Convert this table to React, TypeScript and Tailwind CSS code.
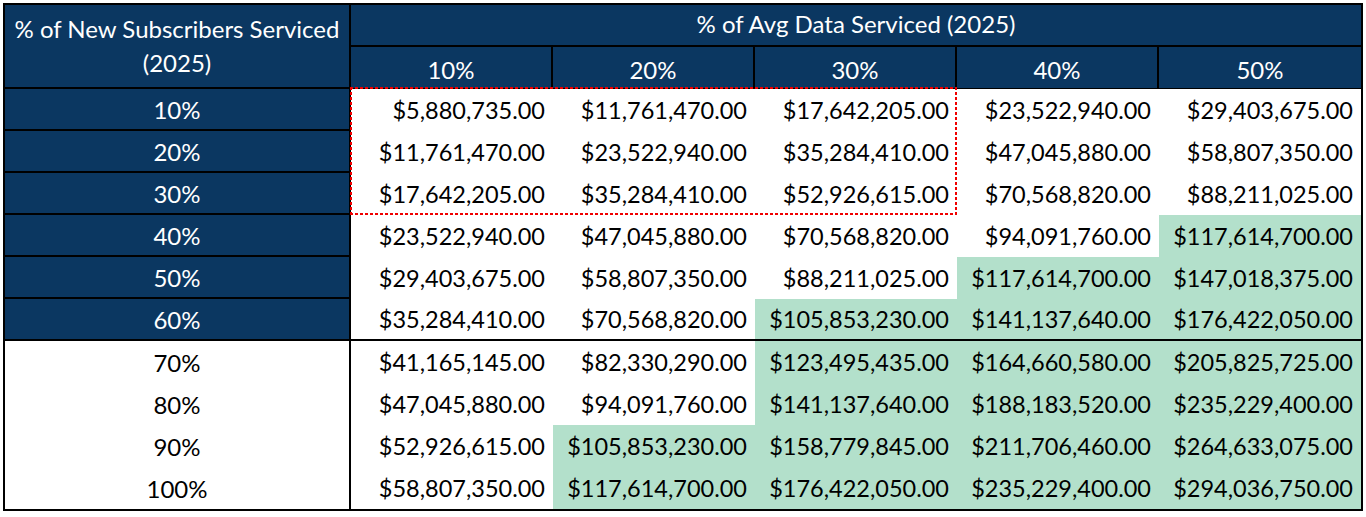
const COLS = [10, 20, 30, 40, 50];
const ROWS = [10, 20, 30, 40, 50, 60, 70, 80, 90, 100];
const BASE = 5880735;

const money = (n: number) =>
  "$" + String(n).replace(/\B(?=(\d{3})+(?!\d))/g, ",") + ".00";

const BodyRow = ({ r }: { r: number }) => {
  const navy = r <= 60;
  const line = r === 60;
  return (
    <div className="flex h-[42px]">
      <div
        className={`flex w-[346px] items-center justify-center border-r-2 border-black pt-[2px] ${
          navy ? "border-b-2 bg-[#0b3761] text-white" : "bg-white text-black"
        }`}
      >
        {r}%
      </div>
      {COLS.map((c) => {
        const value = BASE * (r / 10) * (c / 10);
        return (
          <div
            key={c}
            className={`flex w-[202px] items-center justify-end pr-[8px] pt-[2px] text-[23.5px] text-black ${
              value > 100000000 ? "bg-[#b3e0cb]" : "bg-white"
            } ${line ? "border-b-2 border-black" : ""}`}
          >
            {money(Math.round(value))}
          </div>
        );
      })}
    </div>
  );
};

export default function App() {
  return (
    <div className="h-[517px] w-[1366px] bg-white pl-[3px] pt-[3px] font-['Lato','Open_Sans',sans-serif] text-[24px] leading-none">
      <div className="w-fit border-2 border-black">
        <div className="flex">
          <div className="flex h-[84px] w-[346px] flex-col items-center justify-center border-r-2 border-b-2 border-black bg-[#0b3761] text-white leading-[34px]">
            <span>% of New Subscribers Serviced</span>
            <span>(2025)</span>
          </div>
          <div className="flex w-[1010px] flex-col bg-[#0b3761] text-white">
            <div className="flex h-[42px] items-center justify-center border-b-2 border-black pb-[2px]">
              % of Avg Data Serviced (2025)
            </div>
            <div className="flex h-[42px]">
              {COLS.map((c, i) => (
                <div
                  key={c}
                  className={`flex w-[202px] items-center justify-center border-b border-black pt-[4px] ${
                    i < COLS.length - 1 ? "border-r-2" : ""
                  }`}
                >
                  {c}%
                </div>
              ))}
            </div>
          </div>
        </div>
        <div className="relative">
          {ROWS.map((r) => (
            <BodyRow key={r} r={r} />
          ))}
          <div className="pointer-events-none absolute left-[345px] top-[-2px] h-[128px] w-[607px] [background-image:linear-gradient(90deg,#f00000_3px,transparent_3px),linear-gradient(90deg,#f00000_3px,transparent_3px),linear-gradient(#f00000_3px,transparent_3px),linear-gradient(#f00000_3px,transparent_3px)] [background-size:5px_2px,5px_2px,2px_5px,2px_5px] [background-position:0_0,0_100%,0_0,100%_0] [background-repeat:repeat-x,repeat-x,repeat-y,repeat-y]" />
        </div>
      </div>
    </div>
  );
}
